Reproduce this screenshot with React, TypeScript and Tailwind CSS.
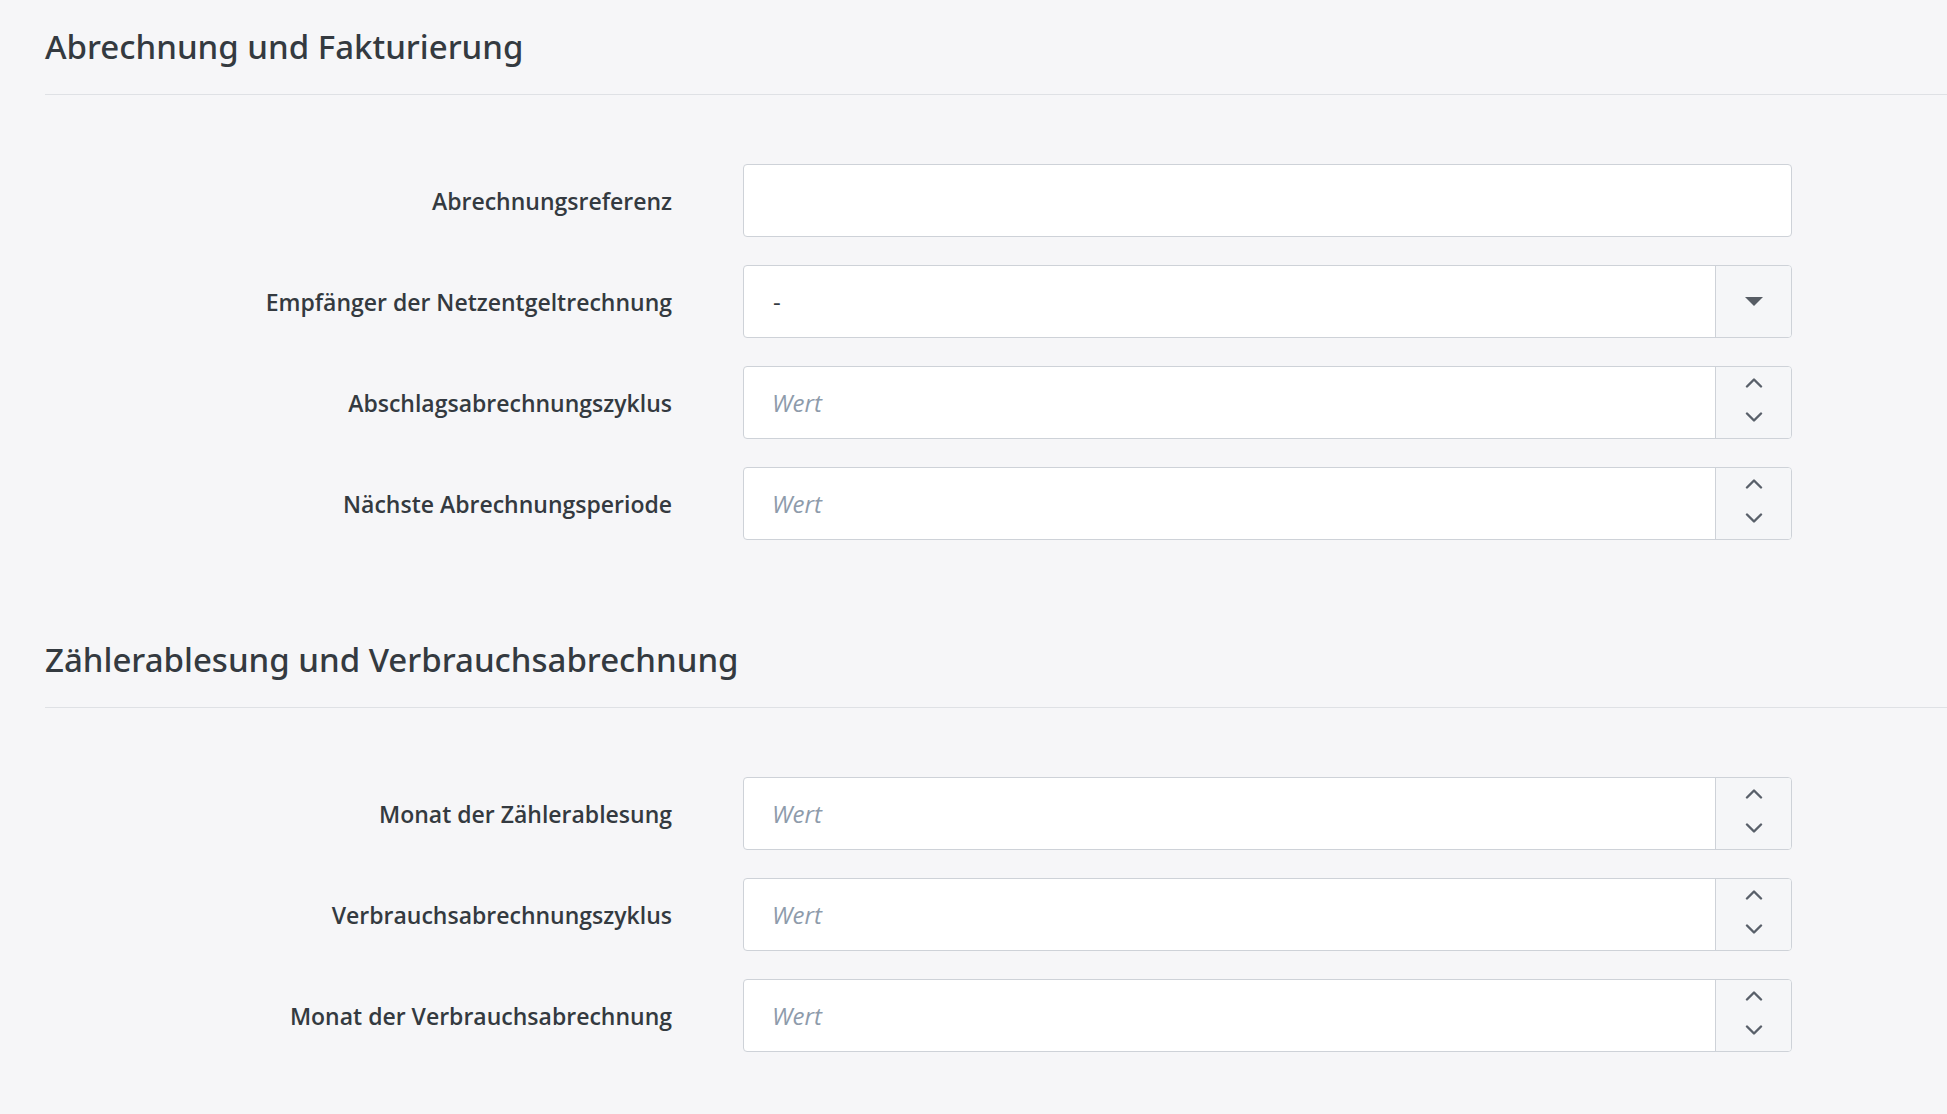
import type { ReactNode } from 'react'

type FieldKind = 'text' | 'select' | 'number'

interface FieldDef {
  readonly label: string
  readonly kind: FieldKind
  readonly value?: string
}

interface SectionDef {
  readonly title: string
  readonly fields: FieldDef[]
}

const SECTIONS: SectionDef[] = [
  {
    title: 'Abrechnung und Fakturierung',
    fields: [
      { label: 'Abrechnungsreferenz', kind: 'text' },
      { label: 'Empfänger der Netzentgeltrechnung', kind: 'select', value: '-' },
      { label: 'Abschlagsabrechnungszyklus', kind: 'number' },
      { label: 'Nächste Abrechnungsperiode', kind: 'number' },
    ],
  },
  {
    title: 'Zählerablesung und Verbrauchsabrechnung',
    fields: [
      { label: 'Monat der Zählerablesung', kind: 'number' },
      { label: 'Verbrauchsabrechnungszyklus', kind: 'number' },
      { label: 'Monat der Verbrauchsabrechnung', kind: 'number' },
    ],
  },
]

function Chevron({ up }: { up?: boolean }) {
  return (
    <svg width="18" height="10" viewBox="0 0 18 10" fill="none" aria-hidden="true">
      <polyline
        points={up ? '2,8.5 9,1.5 16,8.5' : '2,1.5 9,8.5 16,1.5'}
        stroke="#59606a"
        strokeWidth="2.4"
        strokeLinecap="round"
        strokeLinejoin="round"
      />
    </svg>
  )
}

function Caret() {
  return (
    <svg width="18" height="9" viewBox="0 0 18 9" aria-hidden="true">
      <polygon points="0,0 18,0 9,9" fill="#575d65" />
    </svg>
  )
}

function Addon({ children }: { children: ReactNode }) {
  return (
    <div className="flex w-[76px] shrink-0 flex-col items-center justify-center border-l border-[#ced2d8] bg-[#f5f6f8]">
      {children}
    </div>
  )
}

function Control({ field }: { field: FieldDef }) {
  const inputClass =
    "h-full min-w-0 flex-1 bg-transparent pl-[28px] text-[24px] text-[#343a40] outline-none placeholder:italic placeholder:text-[#8e9bab]"

  return (
    <div className="flex h-[73px] w-[1049px] overflow-hidden rounded-[4px] border border-[#ced2d8] bg-white">
      {field.kind === 'text' && <input type="text" className={inputClass} />}

      {field.kind === 'select' && (
        <>
          <div className="flex flex-1 items-center pl-[29px] text-[24px] text-[#343a40]">{field.value}</div>
          <Addon>
            <Caret />
          </Addon>
        </>
      )}

      {field.kind === 'number' && (
        <>
          <input type="text" inputMode="numeric" placeholder="Wert" className={inputClass} />
          <Addon>
            <div className="mb-[5px] flex flex-col items-center gap-[24px]">
              <Chevron up />
              <Chevron />
            </div>
          </Addon>
        </>
      )}
    </div>
  )
}

function Section({ section, first }: { section: SectionDef; first: boolean }) {
  return (
    <section className={first ? '' : 'mt-[73px]'}>
      <div className="border-b border-[#dfe1e5] pb-[25px] pt-[25px]">
        <h2 className="font-['Noto_Sans',sans-serif] text-[33px] font-medium leading-[44px] text-[#343a40]">
          {section.title}
        </h2>
      </div>

      <div className="mt-[69px] flex flex-col gap-[28px]">
        {section.fields.map((field) => (
          <div key={field.label} className="flex items-center">
            <label className="w-[627px] shrink-0 pt-[2px] text-right text-[23px] font-semibold text-[#343a40]">
              {field.label}
            </label>
            <div className="ml-[71px]">
              <Control field={field} />
            </div>
          </div>
        ))}
      </div>
    </section>
  )
}

export default function App() {
  return (
    <div className="min-h-screen bg-[#f6f6f8] pl-[45px] font-['Open_Sans',sans-serif]">
      {SECTIONS.map((section, i) => (
        <Section key={section.title} section={section} first={i === 0} />
      ))}
    </div>
  )
}
